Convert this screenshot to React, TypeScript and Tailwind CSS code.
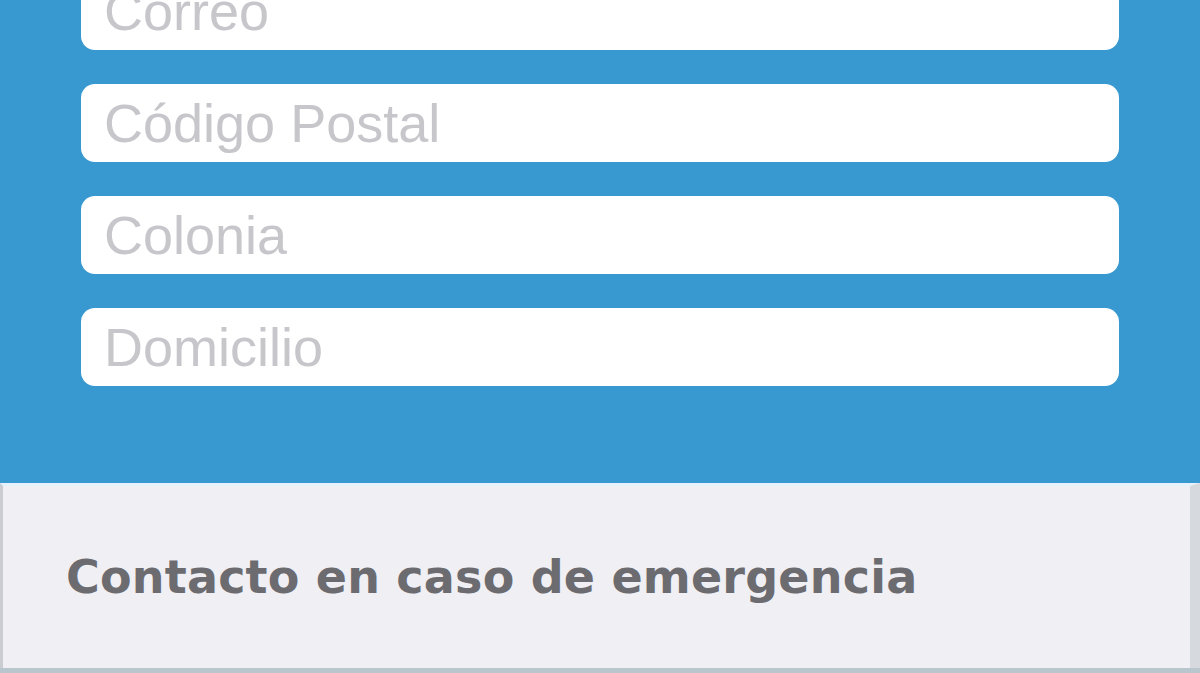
const fields = ['Correo', 'Código Postal', 'Colonia', 'Domicilio']

export default function App() {
  return (
    <div className="h-[673px] w-[1200px] overflow-hidden flex flex-col bg-[#b9c6ce]">
      <section className="bg-[#3899d0] px-[81px] pb-[97px] overflow-hidden">
        <div className="flex flex-col gap-[34px] -mt-[28px]">
          {fields.map((f) => (
            <div
              key={f}
              className="h-[78px] rounded-[14px] bg-white flex items-center pl-[23px] text-[54px] text-[#c6c6cb]"
              style={{ fontFamily: '"Liberation Sans", Arial, sans-serif' }}
            >
              {f}
            </div>
          ))}
        </div>
      </section>
      <section className="h-[185px] shrink-0 bg-[#efeff4] border-t-[3px] border-t-[#e6f2f9] border-l-[3px] border-l-[#c9cdd2] border-r-[10px] border-r-[#d6d9dd] flex items-center pl-[63px]">
        <h2
          className="text-[46px] font-bold text-[#6b6b70] tracking-[0.2px]"
          style={{ fontFamily: '"DejaVu Sans", Lato, sans-serif' }}
        >
          Contacto en caso de emergencia
        </h2>
      </section>
    </div>
  )
}
